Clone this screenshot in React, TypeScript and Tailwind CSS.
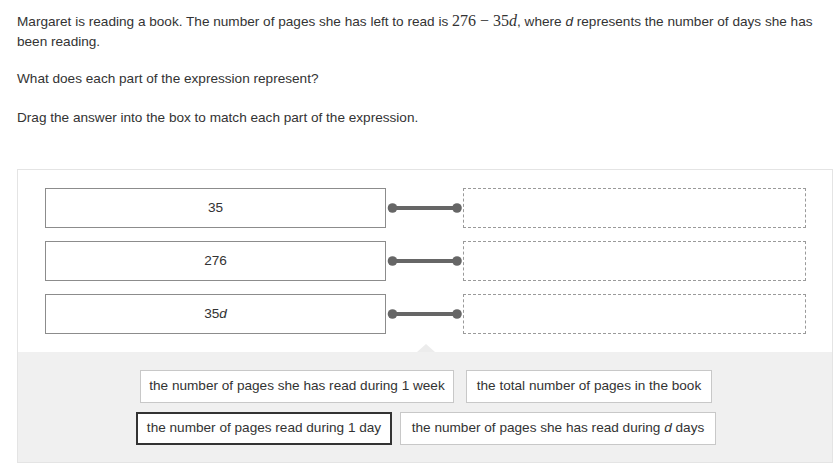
import React from "react";

const Connector = () => (
  <svg width="77" height="12" viewBox="0 0 77 12" className="shrink-0">
    <line x1="6.5" y1="6" x2="71" y2="6" stroke="#666666" strokeWidth="4" />
    <circle cx="6.5" cy="6" r="4.8" fill="#666666" />
    <circle cx="71" cy="6" r="4.8" fill="#666666" />
  </svg>
);

const Row = ({ children }: { children: React.ReactNode }) => (
  <div className="flex items-center">
    <div className="w-[341px] h-[40px] border border-[#8c8c8c] bg-white flex items-center justify-center text-[13.6px] text-[#333]">
      {children}
    </div>
    <Connector />
    <div className="w-[343px] h-[40px] border border-dashed border-[#9a9a9a] bg-white" />
  </div>
);

const Chip = ({ w, children, dark }: { w: string; children: React.ReactNode; dark?: boolean }) => (
  <div
    className={`${w} h-[33px] bg-white flex items-center justify-center text-[13.6px] text-[#333] whitespace-nowrap ${
      dark ? "border-2 border-[#333]" : "border border-[#c8c8c8]"
    }`}
  >
    {children}
  </div>
);

export default function App() {
  return (
    <div
      className="w-[834px] h-[468px] bg-white pl-[17px] pt-[11px] text-[#333]"
      style={{ fontFamily: '"Liberation Sans", Arial, sans-serif' }}
    >
      <p className="text-[13.6px] leading-[20px] pr-[10px]">
        Margaret is reading a book. The number of pages she has left to read is{" "}
        <span className="text-[16px]" style={{ fontFamily: '"Liberation Serif", serif' }}>
          276 − 35<i>d</i>
        </span>
        , where <i>d</i> represents the number of days she has been reading.
      </p>
      <p className="text-[13.6px] leading-[20px] mt-[17px]">What does each part of the expression represent?</p>
      <p className="text-[13.6px] leading-[20px] mt-[19px]">Drag the answer into the box to match each part of the expression.</p>

      <div className="mt-[41px] w-[816px] border border-[#e4e4e4]">
        <div className="relative bg-white pt-[18px] pb-[18px] pl-[27px] flex flex-col gap-[13px]">
          <Row>35</Row>
          <Row>276</Row>
          <Row>
            35<i>d</i>
          </Row>
          <div className="absolute left-[399px] bottom-0 w-0 h-0 border-l-[9px] border-r-[9px] border-b-[8px] border-l-transparent border-r-transparent border-b-[#ececec]" />
        </div>
        <div className="bg-[#f0f0f0] pt-[18px] pb-[17px] flex flex-col items-center gap-[9px]">
          <div className="flex gap-[12px] pl-[2px]">
            <Chip w="w-[314px]">the number of pages she has read during 1 week</Chip>
            <Chip w="w-[246px]">the total number of pages in the book</Chip>
          </div>
          <div className="flex gap-[8px] pl-[2px]">
            <Chip w="w-[256px]" dark>
              the number of pages read during 1 day
            </Chip>
            <Chip w="w-[316px]">
              <span>
                the number of pages she has read during <i>d</i> days
              </span>
            </Chip>
          </div>
        </div>
      </div>
    </div>
  );
}
